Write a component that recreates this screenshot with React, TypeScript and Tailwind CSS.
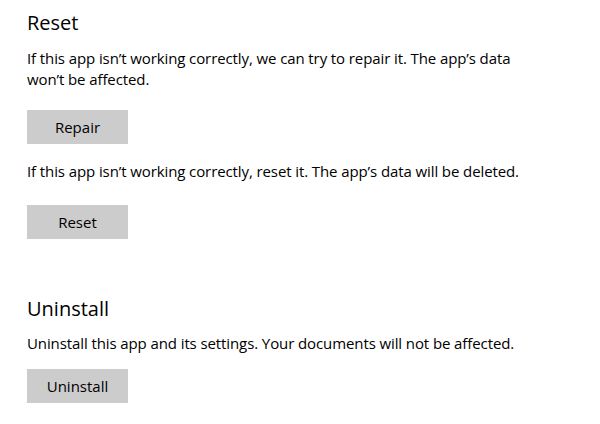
export default function App() {
  return (
    <main className="min-h-screen w-[600px] h-[424px] bg-white pl-[27px] pt-[9px] text-black font-['Open_Sans',sans-serif]">
      <h2 className="text-[20px] leading-[28px]">Reset</h2>
      <p className="mt-[11px] w-[520px] text-[15px] leading-[21px] tracking-[-0.1px]">
        If this app isn’t working correctly, we can try to repair it. The app’s data won’t be affected.
      </p>
      <button className="mt-[20px] block h-[34px] w-[101px] bg-[#cccccc] text-[15px]">Repair</button>
      <p className="mt-[17px] text-[15px] leading-[21px] tracking-[-0.1px]">
        If this app isn’t working correctly, reset it. The app’s data will be deleted.
      </p>
      <button className="mt-[23px] block h-[34px] w-[101px] bg-[#cccccc] text-[15px]">Reset</button>
      <h2 className="mt-[56px] text-[20px] leading-[28px]">Uninstall</h2>
      <p className="mt-[10px] text-[15px] leading-[21px] tracking-[-0.1px]">
        Uninstall this app and its settings. Your documents will not be affected.
      </p>
      <button className="mt-[15px] block h-[34px] w-[101px] bg-[#cccccc] text-[15px]">Uninstall</button>
    </main>
  );
}
